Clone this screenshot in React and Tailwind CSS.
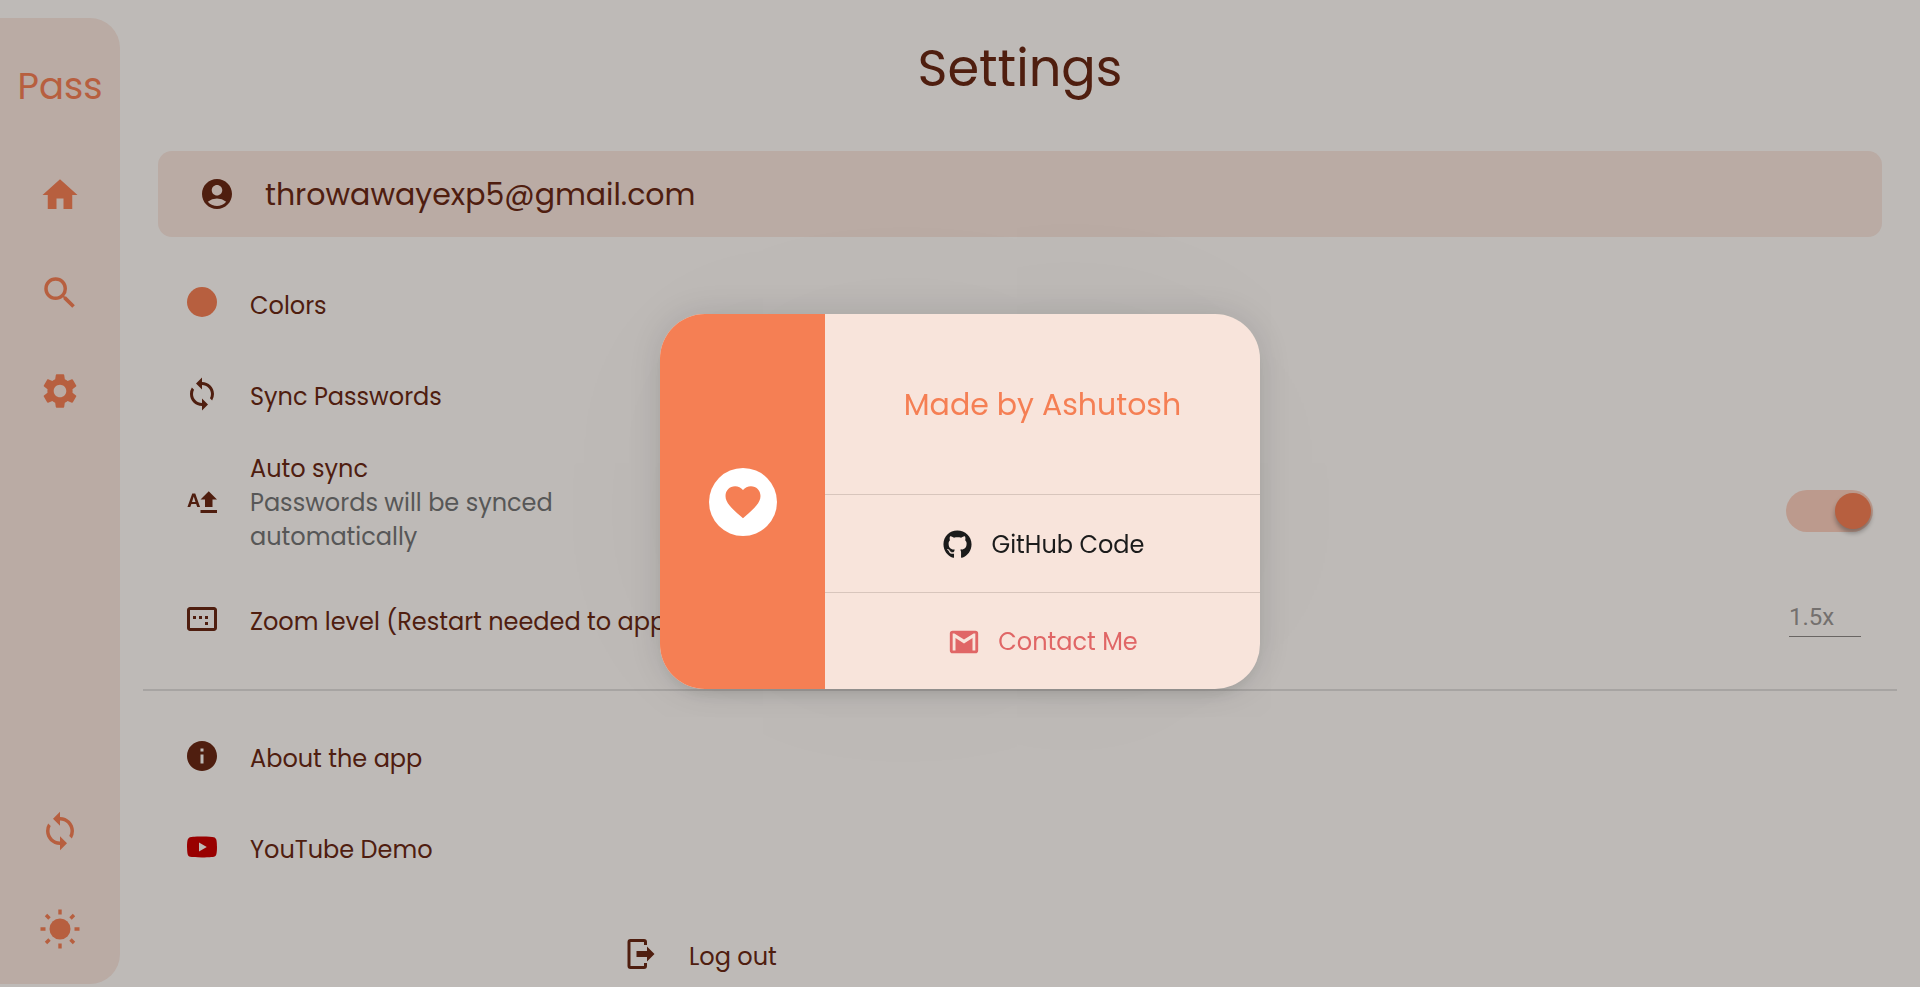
import { MdHome, MdSearch, MdSettings, MdSync, MdAccountCircle, MdInfo, MdFavorite, MdImageAspectRatio } from "react-icons/md";
import { FaGithub } from "react-icons/fa";

function Glyph({ d, className }) {
  return (
    <svg viewBox="0 0 24 24" fill="currentColor" aria-hidden="true" className={className}>
      <path d={d} />
    </svg>
  );
}

const GLYPHS = {
  auto: "M5.35 12.650L6.500 9l1.150 3.650M5.500 7L2.300 16h1.900l.7-2h3.200l.7 2h1.900L7.500 7M11 20h11v-2H11M14 16h5v-5h3l-5.500-5.500L11 11h3v5z",
  logout: "M16 17v-3H9v-4h7V7l5 5-5 5M14 2a2 2 0 0 1 2 2v2h-2V4H5v16h9v-2h2v2a2 2 0 0 1-2 2H5a2 2 0 0 1-2-2V4a2 2 0 0 1 2-2h9z",
  youtube: "M10 15l5.19-3L10 9v6m11.56-7.83c.13.47.22 1.1.28 1.9.07.8.1 1.49.1 2.09L22 12c0 2.19-.16 3.8-.44 4.83-.25.9-.83 1.48-1.73 1.73-.47.13-1.33.22-2.65.28-1.3.07-2.49.1-3.59.1L12 19c-4.19 0-6.8-.16-7.83-.44-.9-.25-1.48-.83-1.73-1.73-.13-.47-.22-1.1-.28-1.9-.07-.8-.1-1.49-.1-2.09L2 12c0-2.19.16-3.8.44-4.83.25-.9.83-1.48 1.73-1.73.47-.13 1.33-.22 2.65-.28 1.3-.07 2.49-.1 3.59-.1L12 5c4.19 0 6.8.16 7.83.44.9.25 1.48.83 1.73 1.73z",
  gmail: "M20 18h-2V9.25L12 13 6 9.25V18H4V6h1.2l6.8 4.25L18.8 6H20m0-2H4a2 2 0 0 0-2 2v12a2 2 0 0 0 2 2h16a2 2 0 0 0 2-2V6a2 2 0 0 0-2-2z",
};

function Sun({ className }) {
  return (
    <svg viewBox="0 0 40 40" aria-hidden="true" className={className}>
      <circle cx="20" cy="20" r="10.5" fill="currentColor" />
      <g stroke="currentColor" strokeWidth="3.4">
        <path d="M20 .5v5M20 34.500v5M.5 20h5M34.500 20h5M6 6l3.500 3.500M30.500 30.500l3.500 3.500M34 6l-3.500 3.500M9.500 30.500L6 34" />
      </g>
    </svg>
  );
}

function NavButton({ label, children }) {
  return (
    <button type="button" aria-label={label} className="flex h-[98px] w-full items-center justify-center">
      {children}
    </button>
  );
}

function Row({ icon, children }) {
  return (
    <button type="button" className="flex h-[91px] w-full items-center gap-[30px] pl-7 text-left">
      <span className="flex h-9 w-9 items-center justify-center">{icon}</span>
      <span className="pt-1.5">{children}</span>
    </button>
  );
}

export default function App() {
  return (
    <div className="flex h-screen overflow-hidden bg-[#fef9f5] font-['Poppins',Inter,sans-serif] text-[24px] leading-[34px] text-[#6a2914]">
      <nav className="mt-[18px] mb-[3px] flex w-[120px] shrink-0 flex-col justify-between rounded-r-[30px] bg-[#f8e4db] text-[#f57f54]">
        <div className="flex flex-col">
          <div className="flex h-[128px] items-center justify-center pt-2 text-[37px]">Pass</div>
          <NavButton label="Home"><MdHome className="size-[42px]" /></NavButton>
          <NavButton label="Search"><MdSearch className="size-[42px]" /></NavButton>
          <NavButton label="Settings"><MdSettings className="size-[42px]" /></NavButton>
        </div>
        <div className="flex flex-col pb-1.5">
          <NavButton label="Sync"><MdSync className="size-[42px]" /></NavButton>
          <NavButton label="Theme"><Sun className="size-10" /></NavButton>
        </div>
      </nav>

      <main className="flex min-w-0 flex-1 flex-col px-[23px]">
        <h1 className="mt-8 text-center text-[51px] leading-[72px]">Settings</h1>
        <div className="mx-[15px] mt-[47px] flex h-[86px] shrink-0 items-center gap-[30px] rounded-[14px] bg-[#f8e4db] pl-[41px] text-[30px]">
          <MdAccountCircle className="size-9" />
          <span className="pt-0.5">throwawayexp5@gmail.com</span>
        </div>
        <div className="mt-5 flex flex-col pl-[13px]">
          <Row icon={<span className="mb-0.5 size-[30px] rounded-full bg-[#f57f54]" />}>Colors</Row>
          <Row icon={<MdSync className="size-9" />}>Sync Passwords</Row>
          <div className="flex items-center gap-[30px] pt-[13px] pr-6 pl-7">
            <Glyph d={GLYPHS.auto} className="mb-1 size-9" />
            <label htmlFor="auto-sync" className="w-[320px]">
              Auto sync
              <span className="block text-[#757575]">Passwords will be synced automatically</span>
            </label>
            <span className="relative mt-4 ml-auto flex h-[42px] w-[87px] items-center">
              <input id="auto-sync" type="checkbox" role="switch" defaultChecked className="peer h-[42px] w-[87px] appearance-none rounded-full bg-[#f57f54]/35" />
              <span className="pointer-events-none absolute right-[2px] size-9 rounded-full bg-[#f57f54] shadow-[0_4px_5px_rgba(0,0,0,0.3)]" />
            </span>
          </div>
          <div className="mt-[19px] flex h-[91px] items-center gap-[30px] pr-9 pl-7">
            <MdImageAspectRatio aria-hidden="true" className="size-9" />
            <label htmlFor="zoom" className="pt-1.5">Zoom level (Restart needed to apply)</label>
            <input id="zoom" defaultValue="1.5x" className="ml-auto h-9 w-[72px] border-b border-[#8d8784] bg-transparent pb-0.5 font-[Roboto,sans-serif] text-[#9b9693] outline-none" />
          </div>
        </div>
        <hr className="mt-[25px] border-t-2 border-[#dfdbd8]" />
        <div className="mt-[19px] flex flex-col pl-[13px]">
          <Row icon={<MdInfo className="size-9" />}>About the app</Row>
          <Row icon={<Glyph d={GLYPHS.youtube} className="size-9 text-[#cc0000]" />}>YouTube Demo</Row>
        </div>
        <button type="button" className="mt-4 ml-[480px] flex h-[91px] shrink-0 items-center gap-[30px] self-start">
          <Glyph d={GLYPHS.logout} className="size-9" />
          <span className="pt-1.5">Log out</span>
        </button>
      </main>

      <div className="fixed inset-0 flex items-center justify-center bg-black/25 pt-4">
        <div role="dialog" aria-modal="true" aria-labelledby="credits" className="flex h-[375px] w-[600px] overflow-hidden rounded-[45px] bg-[#f8e4db] shadow-[0_11px_15px_-7px_rgba(0,0,0,0.1),0_0_38px_rgba(0,0,0,0.13),0_0_240px_rgba(0,0,0,0.04)]">
          <div className="flex w-[165px] shrink-0 items-center justify-center bg-[#f57f54]">
            <span className="flex size-[68px] items-center justify-center rounded-full bg-white text-[#f57f54]">
              <MdFavorite className="size-[42px]" />
            </span>
          </div>
          <div className="flex flex-1 flex-col divide-y divide-[#d8c5bc]">
            <h2 id="credits" className="flex h-[181px] items-center justify-center pt-0.5 text-[30px] text-[#f57f54]">Made by Ashutosh</h2>
            <a href="#github" className="flex flex-1 items-center justify-center gap-5 pt-[3px] pl-0.5 text-[#1b1b1b]">
              <FaGithub className="mb-0.5 size-[29px]" />
              GitHub Code
            </a>
            <a href="#contact" className="flex flex-1 items-center justify-center gap-[17px] pt-0.5 text-[#e06666]">
              <Glyph d={GLYPHS.gmail} className="size-[34px]" />
              Contact Me
            </a>
          </div>
        </div>
      </div>
    </div>
  );
}
